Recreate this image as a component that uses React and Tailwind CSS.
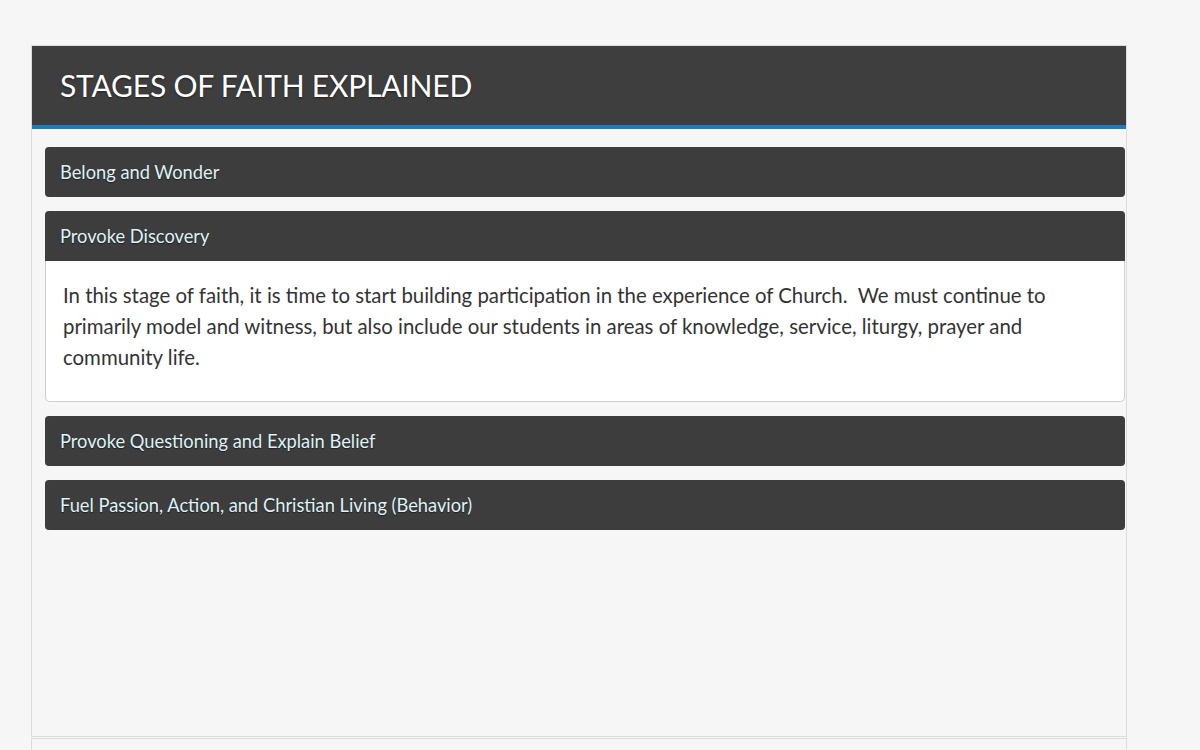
const stages = [
  { title: 'Belong and Wonder' },
  {
    title: 'Provoke Discovery',
    open: true,
    body: 'In this stage of faith, it is time to start building participation in the experience of Church.\u00a0 We must continue to primarily model and witness, but also include our students in areas of knowledge, service, liturgy, prayer and community life.',
  },
  { title: 'Provoke Questioning and Explain Belief' },
  { title: 'Fuel Passion, Action, and Christian Living (Behavior)' },
];

function StageItem({ title, body, open }) {
  return (
    <div>
      <div
        className={`h-[50px] flex items-center pl-[15px] pt-[2px] bg-[#3d3d3d] text-[#dff2f6] text-[18.3px] ${open ? 'rounded-t-[4px]' : 'rounded-[4px]'}`}
        style={{ textShadow: '0 1px 1px rgba(0,0,0,0.5)' }}
      >
        {title}
      </div>
      {open && (
        <div className="bg-white border border-t-0 border-[#cfcfcf] rounded-b-[5px] pl-[17px] pr-4 pt-[19px] pb-[28px] text-[20.4px] leading-[31px] text-[#333]">
          {body}
        </div>
      )}
    </div>
  );
}

export default function App() {
  return (
    <div className="min-h-[750px] bg-[#f6f6f6] pt-[45px] pl-[31px] font-['Lato',sans-serif]">
      <div className="w-[1096px] h-[692px] border border-[#dcdcdc] bg-[#f6f6f6]">
        <div className="h-[83px] bg-[#3e3e3e] border-b-4 border-[#1b7cc1] flex items-center pl-[28px]">
          <h1
            className="text-white text-[30px] font-normal tracking-[-0.2px]"
            style={{ textShadow: '0 1px 2px rgba(0,0,0,0.5)' }}
          >
            STAGES OF FAITH EXPLAINED
          </h1>
        </div>
        <div className="pt-[18px] pl-[13px] pr-px flex flex-col gap-[14px]">
          {stages.map((s) => (
            <StageItem key={s.title} {...s} />
          ))}
        </div>
      </div>
      <div className="w-[1096px] h-[20px] mt-px border border-b-0 border-[#dcdcdc] bg-[#f6f6f6]" />
    </div>
  );
}
